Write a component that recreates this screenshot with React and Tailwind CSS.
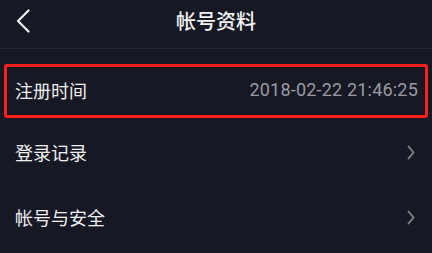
import React from "react";

const cjk = { fontFamily: '"Noto Sans CJK SC", "Noto Sans", sans-serif' };
const num = { fontFamily: 'Roboto, "Noto Sans CJK SC", sans-serif' };

function ChevronRight() {
  return (
    <svg width="8" height="15" viewBox="0 0 8 15" fill="none">
      <path d="M1.5 1.5 L6.5 7.5 L1.5 13.5" stroke="#85868e" strokeWidth="1.8" strokeLinecap="round" strokeLinejoin="round" />
    </svg>
  );
}

export default function App() {
  return (
    <div className="w-[432px] h-[253px] bg-[#161823] overflow-hidden flex flex-col" style={cjk}>
      <div className="relative h-[48px] flex items-center justify-center shrink-0">
        <div className="absolute left-[16px] top-[9px]">
          <svg width="14" height="24" viewBox="0 0 14 24" fill="none">
            <path d="M12.5 1.5 L2 12 L12.5 22.5" stroke="#f2f2f4" strokeWidth="2.2" strokeLinecap="round" strokeLinejoin="round" />
          </svg>
        </div>
        <span className="text-[20px] leading-none text-[#f2f2f4] font-medium -mt-[6px]">帐号资料</span>
      </div>
      <div className="h-px bg-[#262833] shrink-0" />
      <div className="mt-[15px] mx-[4px] h-[54px] border-[3px] border-[#ff1f1f] rounded-[3px] flex items-center justify-between pl-[8px] pr-[7px] shrink-0">
        <span className="text-[18px] leading-none text-[#f0f0f2] -mt-[2px]">注册时间</span>
        <span className="text-[18px] leading-none text-[#9a9ba2] -mt-[2px] tracking-[0.2px]" style={num}>2018-02-22 21:46:25</span>
      </div>
      <div className="mt-[2px] h-[64px] flex items-center justify-between pl-[15px] pr-[17px] shrink-0">
        <span className="text-[18px] leading-none text-[#f0f0f2]">登录记录</span>
        <ChevronRight />
      </div>
      <div className="h-[66px] flex items-center justify-between pl-[15px] pr-[17px] shrink-0">
        <span className="text-[18px] leading-none text-[#f0f0f2]">帐号与安全</span>
        <ChevronRight />
      </div>
    </div>
  );
}
